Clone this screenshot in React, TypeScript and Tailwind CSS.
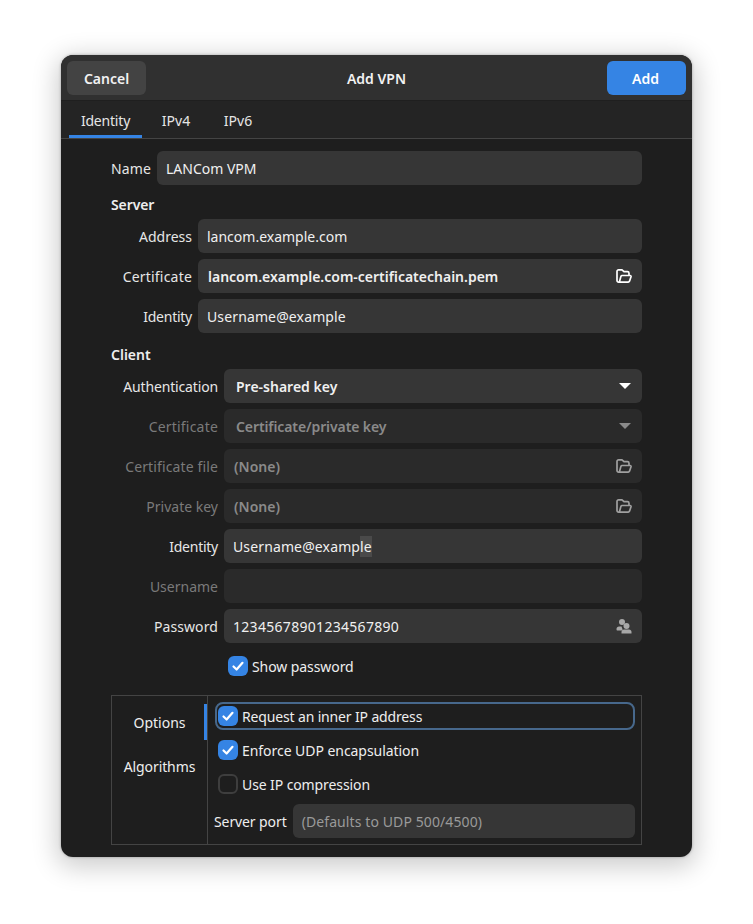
const font = { fontFamily: '"Noto Sans", sans-serif' };

function FolderOpen({ dim }: { dim?: boolean }) {
    return (
        <svg width="16" height="16" viewBox="0 0 16 16" fill="none" stroke="currentColor" strokeWidth="1.7" strokeLinejoin="round" className={dim ? 'text-[#a0a0a0]' : 'text-white'}>
            <path d="M4 14.1H2.6A1.6 1.6 0 0 1 1 12.5V3.4A1.6 1.6 0 0 1 2.6 1.8H6L8 3.7H11.4A1.6 1.6 0 0 1 13 5.3V7" />
            <path d="M4 14.1H12.2C12.8 14.1 13.2 13.8 13.5 13.2L15 8.8C15.2 8.1 14.8 7.5 14.1 7.5H6.1C5.5 7.5 5.1 7.8 4.9 8.4L3.4 14" />
        </svg>
    );
}

function Users() {
    return (
        <svg width="16" height="16" viewBox="0 0 16 16" className="text-[#a8a8a8]" fill="currentColor">
            <circle cx="6" cy="4" r="3" />
            <circle cx="10.5" cy="8" r="3" />
            <path d="M0.5 11C0.5 9.5 1.6 8.5 3 8.5H5.5C6 10 6.5 10.5 6.5 11.5V12.5H1.5C0.9 12.5 0.5 12 0.5 11.5Z" />
            <path d="M5.5 15.5V14C5.5 12.5 6.6 11.5 8 11.5H13C14.4 11.5 15.5 12.5 15.5 14V15.5Z" />
        </svg>
    );
}

function Check({ on }: { on?: boolean }) {
    if (!on) return <div className="w-5 h-5 shrink-0 rounded-[6px] border-2 border-[#3e3e3e]" />;
    return (
        <div className="w-5 h-5 shrink-0 rounded-[6px] bg-[#3584e4] flex items-center justify-center">
            <svg width="14" height="14" viewBox="0 0 14 14" fill="none" stroke="white" strokeWidth="2.2" strokeLinecap="round" strokeLinejoin="round">
                <path d="M2.5 7.5L5.6 10.5L11.5 3.8" />
            </svg>
        </div>
    );
}

function Caret({ dim }: { dim?: boolean }) {
    return <div className={`w-0 h-0 border-x-[6px] border-x-transparent border-t-[6px] ${dim ? 'border-t-[#8a8a8a]' : 'border-t-white'}`} />;
}

interface RowProps {
    label: string;
    labelW: string;
    labelTrack?: string;
    disabled?: boolean;
    children?: React.ReactNode;
    right?: React.ReactNode;
    pad?: string;
}

function Row({ label, labelW, labelTrack = '', disabled, children, right, pad = 'pl-[9px]' }: RowProps) {
    return (
        <div className="flex items-center h-[34px] gap-[6px]">
            <div className={`${labelW} ${labelTrack} shrink-0 text-right pt-[2px] whitespace-nowrap ${disabled ? 'text-[#7a7a7a]' : 'text-[#e6e6e6]'}`}>{label}</div>
            <div className={`flex-1 h-full rounded-[6px] flex items-center justify-between ${pad} pr-[10px] ${disabled ? 'bg-[#2a2a2a] text-[#8a8a8a]' : 'bg-[#363636] text-[#f0f0f0]'}`}>
                <div className="pt-[2px]">{children}</div>
                {right}
            </div>
        </div>
    );
}

export default function App() {
    return (
        <div className="w-[753px] h-[924px] bg-white pt-[55px] pl-[61px] text-[14px] leading-[20px]" style={font}>
            <div className="w-[631px] h-[802px] rounded-[12px] overflow-hidden bg-[#1e1e1e] shadow-[0_6px_26px_4px_rgba(0,0,0,0.2),0_0_3px_rgba(0,0,0,0.3)] flex flex-col">
                {/* header */}
                <div className="h-[46px] bg-[#303030] border-b border-[#1f1f1f] flex items-center justify-between px-[6px] shrink-0">
                    <div className="w-[79px] h-[34px] rounded-[6px] bg-[#434343] text-[#f2f2f2] font-semibold flex items-center justify-center pt-[2px]">Cancel</div>
                    <div className="font-semibold text-[#f2f2f2] pt-[2px]">Add VPN</div>
                    <div className="w-[79px] h-[34px] rounded-[6px] bg-[#3584e4] text-white font-semibold flex items-center justify-center pt-[2px] pr-[2px]">Add</div>
                </div>
                {/* tabs */}
                <div className="h-[38px] bg-[#242424] border-b border-[#444444] flex pl-[8px] gap-[8px] shrink-0 text-[#e6e6e6]">
                    <div className="w-[73px] h-[37px] flex items-center justify-center border-b-[3px] border-[#3584e4] pt-[5px] tracking-[-0.2px]">Identity</div>
                    <div className="w-[52px] h-[37px] flex items-center justify-center pt-[3px]">IPv4</div>
                    <div className="w-[52px] h-[37px] ml-[2px] flex items-center justify-center pt-[3px]">IPv6</div>
                </div>
                {/* body */}
                <div className="pt-[12px] px-[50px] flex flex-col">
                    <Row label="Name" labelW="w-[40px]" labelTrack="tracking-[0.1px]">LANCom VPM</Row>

                    <div className="h-[34px] pt-[6px] flex items-center font-semibold text-[#eeeeee] tracking-[-0.1px]">Server</div>
                    <div className="flex flex-col gap-[6px]">
                        <Row label="Address" labelW="w-[81px]">lancom.example.com</Row>
                        <Row label="Certificate" labelW="w-[81px]" labelTrack="tracking-[0.2px]" right={<FolderOpen />} pad="pl-[10px]">
                            <span className="font-semibold">lancom.example.com-certificatechain.pem</span>
                        </Row>
                        <Row label="Identity" labelW="w-[81px]" labelTrack="tracking-[-0.25px]">
                            <span className="tracking-[0.13px]">Username@example</span>
                        </Row>
                    </div>

                    <div className="h-[36px] pt-[8px] flex items-center font-semibold text-[#eeeeee]">Client</div>
                    <div className="flex flex-col gap-[6px]">
                        <Row label="Authentication" labelW="w-[107px]" labelTrack="tracking-[-0.15px]" pad="pl-[12px]" right={<div className="pr-[1px]"><Caret /></div>}>
                            <span className="font-semibold">Pre-shared key</span>
                        </Row>
                        <Row label="Certificate" labelW="w-[107px]" labelTrack="tracking-[0.2px]" disabled pad="pl-[12px]" right={<div className="pr-[1px]"><Caret dim /></div>}>
                            <span className="font-semibold tracking-[-0.1px]">Certificate/private key</span>
                        </Row>
                        <Row label="Certificate file" labelW="w-[107px]" labelTrack="tracking-[0.13px]" disabled pad="pl-[10px]" right={<FolderOpen dim />}>
                            <span className="font-semibold">(None)</span>
                        </Row>
                        <Row label="Private key" labelW="w-[107px]" disabled pad="pl-[10px]" right={<FolderOpen dim />}>
                            <span className="font-semibold">(None)</span>
                        </Row>
                        <Row label="Identity" labelW="w-[107px]" labelTrack="tracking-[-0.25px]">
                            <span className="tracking-[0.13px]">Username@examp<span className="bg-[#4a4a4a] py-[1px]">le</span></span>
                        </Row>
                        <Row label="Username" labelW="w-[107px]" disabled />
                        <Row label="Password" labelW="w-[107px]" labelTrack="tracking-[0.1px]" right={<Users />}>
                            <span className="tracking-[0.3px]">12345678901234567890</span>
                        </Row>
                    </div>

                    <div className="h-[34px] mt-[6px] pl-[117px] flex items-center gap-[4px] text-[#eeeeee]">
                        <Check on />
                        <span className="pt-[2px] tracking-[-0.08px]">Show password</span>
                    </div>

                    {/* options box */}
                    <div className="mt-[12px] h-[150px] border border-[#444444] flex text-[#eeeeee]">
                        <div className="w-[95px] shrink-0 border-r border-[#444444] pt-[5px] box-content">
                            <div className="h-[44px] flex items-center justify-center relative">
                                Options
                                <div className="absolute right-0 top-[3px] w-[3px] h-[36px] bg-[#3584e4]" />
                            </div>
                            <div className="h-[44px] flex items-center justify-center tracking-[-0.1px]">Algorithms</div>
                        </div>
                        <div className="flex-1 pt-[3px] pl-[7px] pr-[6px]">
                            <div className="h-[34px] flex items-center">
                                <div className="w-full h-[28px] rounded-[8px] border-2 border-[#47688c] flex items-center gap-[4px] pl-[1px]">
                                    <Check on />
                                    <span className="pt-[2px] tracking-[-0.15px]">Request an inner IP address</span>
                                </div>
                            </div>
                            <div className="h-[34px] flex items-center gap-[4px] pl-[3px]">
                                <Check on />
                                <span className="pt-[2px] tracking-[-0.05px]">Enforce UDP encapsulation</span>
                            </div>
                            <div className="h-[34px] flex items-center gap-[4px] pl-[3px]">
                                <Check />
                                <span className="pt-[2px] tracking-[-0.1px]">Use IP compression</span>
                            </div>
                            <div className="mt-[3px] -ml-[1px] flex items-center h-[34px] gap-[6px]">
                                <span className="shrink-0 pt-[2px] tracking-[-0.1px]">Server port</span>
                                <div className="flex-1 h-full rounded-[6px] bg-[#363636] text-[#9a9a9a] flex items-center pl-[9px] pt-[2px] tracking-[0.1px]">(Defaults to UDP 500/4500)</div>
                            </div>
                        </div>
                    </div>
                </div>
            </div>
        </div>
    );
}
